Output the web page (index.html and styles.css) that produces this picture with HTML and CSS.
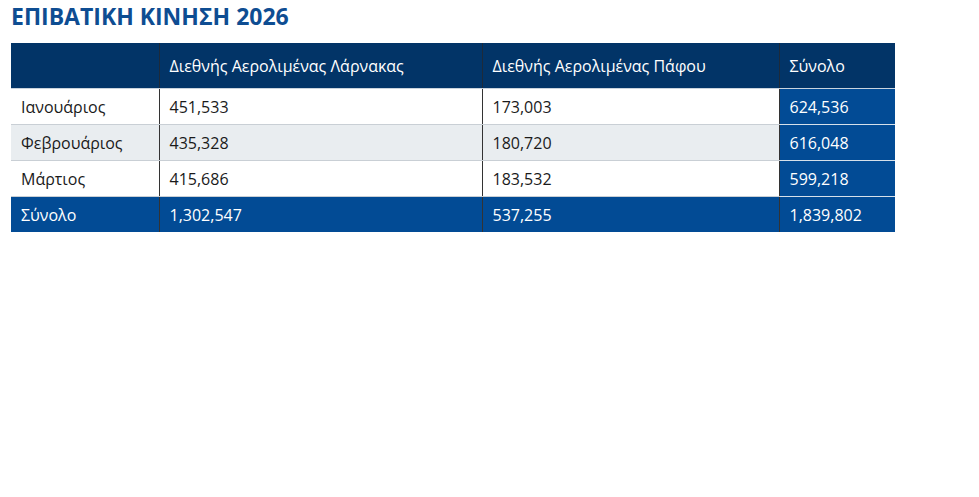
FILE: index.html
```html
<!DOCTYPE html>
<html lang="el">
<head>
<meta charset="utf-8">
<title>Επιβατική κίνηση 2026</title>
<link rel="stylesheet" href="styles.css">
</head>
<body>
<h2 class="title">ΕΠΙΒΑΤΙΚΗ ΚΙΝΗΣΗ 2026</h2>
<table class="traffic">
  <colgroup>
    <col class="c1"><col class="c2"><col class="c3"><col class="c4">
  </colgroup>
  <thead>
    <tr>
      <th></th>
      <th>Διεθνής Αερολιμένας Λάρνακας</th>
      <th>Διεθνής Αερολιμένας Πάφου</th>
      <th>Σύνολο</th>
    </tr>
  </thead>
  <tbody>
    <tr>
      <td>Ιανουάριος</td><td>451,533</td><td>173,003</td><td class="sum">624,536</td>
    </tr>
    <tr class="alt">
      <td>Φεβρουάριος</td><td>435,328</td><td>180,720</td><td class="sum">616,048</td>
    </tr>
    <tr>
      <td>Μάρτιος</td><td>415,686</td><td>183,532</td><td class="sum">599,218</td>
    </tr>
    <tr class="total">
      <td>Σύνολο</td><td>1,302,547</td><td>537,255</td><td class="sum">1,839,802</td>
    </tr>
  </tbody>
</table>
</body>
</html>
```
FILE: styles.css
```css
body {
  margin: 0;
  padding: 0 11px;
  background: #fff;
  font-family: "Open Sans", "Noto Sans", sans-serif;
  color: #222;
}
.title {
  margin: 0;
  padding-top: 1px;
  height: 43px;
  box-sizing: border-box;
  font-size: 23px;
  font-weight: 700;
  line-height: 30px;
  color: #0e4d92;
}
.traffic {
  border-collapse: collapse;
  width: 884px;
  table-layout: fixed;
  font-size: 16px;
}
.c1 { width: 148px; }
.c2 { width: 323px; }
.c3 { width: 297px; }
.c4 { width: 116px; }
.traffic th {
  background: #023467;
  color: #fff;
  font-weight: 400;
  text-align: left;
  height: 45px;
  padding: 0 10px;
  border-left: 1px solid #1d2a3a;
  border-bottom: 1px solid #c9d3dd;
  vertical-align: middle;
  font-size: 16px;
}
.traffic th:first-child { border-left: none; }
.traffic td {
  height: 35px;
  padding: 0 10px;
  border-left: 1px solid #333;
  border-bottom: 1px solid #c9cfd5;
  vertical-align: middle;
  color: #1a1a1a;
  background: #fff;
}
.traffic td:first-child { border-left: none; }
.traffic tr.alt td { background: #e9edf0; }
.traffic td.sum {
  background: #024b95;
  color: #fff;
  border-bottom: 1px solid #d6e0ea;
}
.traffic tr.alt td.sum { background: #024b95; }
.traffic tr.total td {
  background: #024b95;
  color: #fff;
  border-bottom: none;
}
```
